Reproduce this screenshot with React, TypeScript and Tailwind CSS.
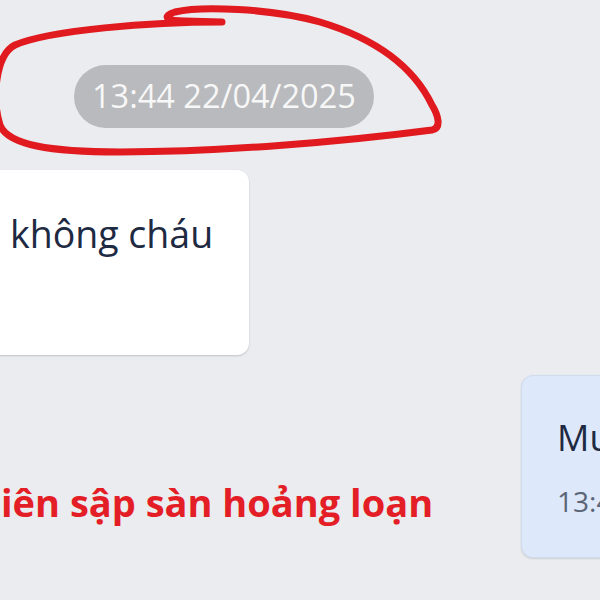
import React from "react";

export default function App() {
  return (
    <div className="relative w-[600px] h-[600px] overflow-hidden bg-[#ebecef] font-['Open_Sans','Noto_Sans',sans-serif]">
      <div className="pt-[65px] pl-[74px]">
        <div className="inline-flex h-[63px] items-center rounded-full bg-[#b9babd] px-[18px] text-[32.5px] leading-none text-[#f7f7f7]">
          13:44 22/04/2025
        </div>
      </div>

      <div className="-ml-[40px] mt-[42px] h-[185px] w-[289px] rounded-[12px] bg-white pl-[50px] pt-[45px] shadow-[0_1px_2px_rgba(0,0,0,0.18)]">
        <div className="text-[37.5px] leading-none text-[#1e2a42]">không cháu</div>
      </div>

      <div className="mt-[20px] flex items-start">
        <div className="w-[521px] shrink-0 pl-[1px] pt-[108px] text-[38px] font-bold leading-none text-[#e41e26] whitespace-nowrap">
          iên sập sàn hoảng loạn
        </div>
        <div className="h-[183px] w-[200px] shrink-0 rounded-[12px] border border-[#cfdcee] bg-[#dde9fb] pl-[35px] pt-[44px] shadow-[0_1px_2px_rgba(0,0,0,0.12)]">
          <div className="text-[36px] leading-none text-[#1e2a42]">Muốn</div>
          <div className="mt-[31px] text-[28px] leading-none text-[#5b6577]">13:45</div>
        </div>
      </div>

      <svg
        className="pointer-events-none absolute inset-0"
        width="600"
        height="600"
        viewBox="0 0 600 600"
      >
        <path
          d="M 222 22 C 150 22, 50 30, 15 45 C -5 55, -8 100, 0 125 C 8 145, 50 152, 120 152 C 220 152, 340 142, 432 130 C 442 128, 438 115, 432 105 C 415 70, 380 40, 320 22 C 270 8, 200 6, 175 12 C 162 16, 165 21, 185 21 L 222 22"
          fill="none"
          stroke="#e01a1f"
          strokeWidth="7"
          strokeLinecap="round"
          strokeLinejoin="round"
        />
      </svg>
    </div>
  );
}
